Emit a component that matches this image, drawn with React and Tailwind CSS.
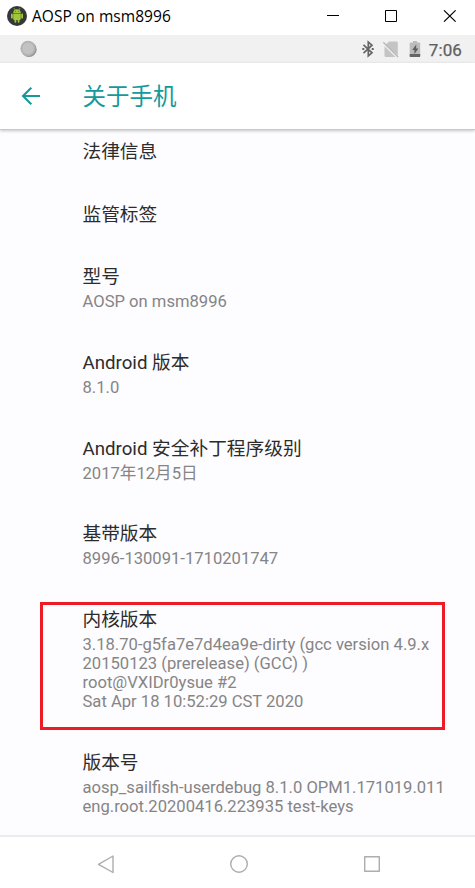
const items = [
  { title: '法律信息' },
  { title: '监管标签' },
  { title: '型号', lines: ['AOSP on msm8996'] },
  { title: 'Android 版本', lines: ['8.1.0'] },
  { title: 'Android 安全补丁程序级别', lines: ['2017年12月5日'] },
  { title: '基带版本', lines: ['8996-130091-1710201747'] },
  {
    title: '内核版本',
    marked: true,
    lines: [
      '3.18.70-g5fa7e7d4ea9e-dirty (gcc version 4.9.x',
      '20150123 (prerelease) (GCC) )',
      'root@VXIDr0ysue #2',
      'Sat Apr 18 10:52:29 CST 2020',
    ],
  },
  {
    title: '版本号',
    lines: ['aosp_sailfish-userdebug 8.1.0 OPM1.171019.011', 'eng.root.20200416.223935 test-keys'],
  },
];

function AndroidLogo() {
  return (
    <svg className="h-5 w-5" viewBox="0 0 20 20">
      <circle cx="10" cy="10" r="10" fill="#35383a" />
      <g fill="#a0c63a" stroke="#a0c63a">
        <path d="M6.2 7a3.8 3.8 0 0 1 7.6 0z" stroke="none" />
        <path d="M7 2.2l1 1.6M13 2.2l-1 1.6" strokeWidth="0.8" />
        <path d="M6.2 7.4h7.6v5.7a.8.8 0 0 1-.8.8H7a.8.8 0 0 1-.8-.8z" stroke="none" />
        <path d="M4.9 8.3v3.4M15.1 8.3v3.4M8.4 13v2.8M11.6 13v2.8" strokeWidth="1.8" strokeLinecap="round" />
      </g>
      <circle cx="8.3" cy="5.3" r="0.45" fill="#35383a" />
      <circle cx="11.7" cy="5.3" r="0.45" fill="#35383a" />
    </svg>
  );
}

function TitleBar() {
  return (
    <div className="flex h-[35px] items-center bg-white pl-[7px]">
      <div className="-mt-[3px]"><AndroidLogo /></div>
      <span className="-mt-px ml-[5px] flex-1 whitespace-nowrap font-['Open_Sans',sans-serif] text-[15.5px] tracking-[0.05px] text-black">
        AOSP on msm8996
      </span>
      <svg className="-mt-[3px] mr-[19px] h-3 w-[129px]" viewBox="0 0 129 12" fill="none" stroke="#000">
        <path d="M0 5.5h12" />
        <path d="M58.5.5h11v11h-11z" />
        <path d="M117 .3l11.6 11.4M128.6.3L117 11.7" strokeWidth="1.1" />
      </svg>
    </div>
  );
}

function StatusBar() {
  return (
    <div className="flex h-7 items-center bg-[#f1f1f1] pl-5">
      <svg className="h-[18px] w-[18px]" viewBox="0 0 18 18">
        <circle cx="9" cy="9.4" r="7.7" fill="#929292" />
        <circle cx="8" cy="8.4" r="7.6" fill="#b5b5b5" />
        <circle cx="8" cy="8.4" r="6" fill="#c2c2c2" stroke="#a9a9a9" strokeWidth="0.6" strokeDasharray="1 1" />
      </svg>
      <div className="flex-1" />
      <svg className="mr-[5px] h-[18px] w-[62px]" viewBox="0 0 62 18">
        <path d="M1.5 4.8l8.5 8L6.3 16V2L10 5.2l-8.5 8" fill="none" stroke="#666" strokeWidth="1.7" />
        <path d="M0.3 8h2v2h-2zM9.7 8h2v2h-2z" fill="#666" />
        <path d="M27 1.5h7.5a1.3 1.3 0 0 1 1.3 1.3v12.4L23.4 5z" fill="#c4c4c4" />
        <path d="M22.5 6.2L33.5 17h-9.8a1.2 1.2 0 0 1-1.2-1.2z" fill="#c4c4c4" />
        <path d="M21.3 2.2L36.2 17" stroke="#b8b8b8" strokeWidth="1.4" />
        <path d="M51 1h4v1.4h2.2c.6 0 1 .4 1 1V16c0 .6-.4 1-1 1h-8.500c-.6 0-1-.4-1-1V3.400c0-.6.4-1 1-1H51z" fill="#bcbcbc" />
        <path d="M47.700 14h10.500v2c0 .6-.4 1-1 1h-8.500c-.6 0-1-.4-1-1z" fill="#666" />
        <path d="M54.200 4.500l-4 5.400h2.200v4l4-5.500h-2.200z" fill="#5e5e5e" />
      </svg>
      <span className="mr-[13px] mt-0.5 text-[17px] font-normal leading-7 tracking-[0.1px] text-[#606060] [-webkit-text-stroke:0.25px_#606060]">7:06</span>
    </div>
  );
}

function Item({ title, lines, marked }) {
  return (
    <div className="relative pb-[40.8px] pl-[82.5px]">
      {marked && <div className="absolute -top-[7px] left-[40px] h-32 w-[405px] border-[3px] border-[#ed1c24]" />}
      <div className="h-[22px] whitespace-nowrap text-[18.7px] leading-[22px] text-[#2c2c2c]">{title}</div>
      {lines && (
        <div className="mt-[3.8px] text-[16.6px] leading-[19.1px] text-[#858585]">
          {lines.map((line) => (
            <div key={line} className="h-[19.1px] whitespace-nowrap">{line}</div>
          ))}
        </div>
      )}
    </div>
  );
}

export default function App() {
  return (
    <div className="flex h-[888px] w-[475px] flex-col overflow-hidden bg-[#fdfcff] font-[Roboto,'Noto_Sans_CJK_SC',sans-serif]">
      <TitleBar />
      <StatusBar />
      <header className="z-10 flex h-[67px] shrink-0 items-center border-b border-[#c9c9c9] bg-white pl-[21px] shadow-[0_1px_3px_rgba(0,0,0,0.22)]">
        <svg className="h-5 w-5" viewBox="0 0 20 20" fill="none" stroke="#16999b" strokeWidth="2.1">
          <path d="M19 10H2M10.3 1.7L2 10l8.3 8.3" />
        </svg>
        <h1 className="ml-[41.5px] mt-0.5 text-[23.5px] leading-8 text-[#16999b]">关于手机</h1>
      </header>
      <main className="min-h-0 flex-1 overflow-hidden pt-[10.8px]">
        {items.map((item) => (
          <Item key={item.title} {...item} />
        ))}
      </main>
      <nav className="flex h-[53px] shrink-0 items-center border-t-2 border-[#ececec] bg-white pl-[97px] pt-[3px]">
        <svg className="h-5 w-[284px]" viewBox="0 0 284 20" fill="none" stroke="#adadad" strokeWidth="1.4" strokeLinejoin="round">
          <path d="M16 2v16.5L1.5 10.3z" />
          <circle cx="142" cy="10" r="8.3" />
          <path d="M267.7 2.7h14.6v14.6h-14.6z" />
        </svg>
      </nav>
    </div>
  );
}
